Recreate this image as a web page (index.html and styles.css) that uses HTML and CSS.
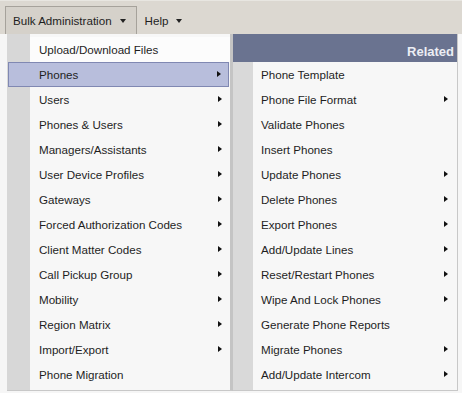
FILE: index.html
```html
<!DOCTYPE html>
<html lang="en">
<head>
    <meta charset="UTF-8">
    <title>Bulk Administration</title>
    <link rel="stylesheet" href="styles.css">
</head>
<body>
    <div class="menubar">
        <div class="top-item open">Bulk Administration <span class="caret"></span></div>
        <div class="top-item">Help <span class="caret"></span></div>
    </div>
    <div class="dropdown">
        <ul class="menu main">
            <li>Upload/Download Files</li>
            <li class="sub active">Phones</li>
            <li class="sub">Users</li>
            <li class="sub">Phones &amp; Users</li>
            <li class="sub">Managers/Assistants</li>
            <li class="sub">User Device Profiles</li>
            <li class="sub">Gateways</li>
            <li class="sub">Forced Authorization Codes</li>
            <li class="sub">Client Matter Codes</li>
            <li class="sub">Call Pickup Group</li>
            <li class="sub">Mobility</li>
            <li class="sub">Region Matrix</li>
            <li class="sub">Import/Export</li>
            <li>Phone Migration</li>
        </ul>
        <div class="submenu">
            <div class="related">Related</div>
            <ul class="menu">
                <li>Phone Template</li>
                <li class="sub">Phone File Format</li>
                <li>Validate Phones</li>
                <li>Insert Phones</li>
                <li class="sub">Update Phones</li>
                <li class="sub">Delete Phones</li>
                <li class="sub">Export Phones</li>
                <li class="sub">Add/Update Lines</li>
                <li class="sub">Reset/Restart Phones</li>
                <li class="sub">Wipe And Lock Phones</li>
                <li>Generate Phone Reports</li>
                <li class="sub">Migrate Phones</li>
                <li class="sub">Add/Update Intercom</li>
            </ul>
        </div>
    </div>
</body>
</html>
```

FILE: styles.css
```css
body {
    margin: 0;
    background: #f6f6f6;
    font-family: "Liberation Sans", Arial, sans-serif;
    font-size: 11.6px;
    color: #1e1e1e;
}
.menubar {
    display: flex;
    height: 34px;
    padding: 5px 0 0 5px;
    box-sizing: border-box;
    background: #dcd8d1;
    border-top: 1px solid #e8e6e1;
}
.top-item {
    display: flex;
    align-items: center;
    gap: 8px;
    padding: 0 7px;
    margin-right: 0;
    border: 1px solid transparent;
    border-bottom: none;
}
.top-item.open {
    background: #d5d1ca;
    border-color: #a6a29b;
    padding-right: 10px;
}
.caret {
    width: 0;
    height: 0;
    border-left: 3px solid transparent;
    border-right: 3px solid transparent;
    border-top: 4px solid #222;
}
.dropdown {
    display: flex;
    margin-left: 7px;
    align-items: flex-start;
}
.menu {
    list-style: none;
    margin: 0;
    padding: 0;
}
.menu li {
    position: relative;
    height: 25px;
    line-height: 25px;
    box-sizing: border-box;
}
.main {
    width: 226px;
    padding: 3px 0 3px;
    background: linear-gradient(to right, #d7d7d7 23px, #f7f7f7 23px);
    border-right: 3px solid #c4c4c4;
    border-bottom: 1px solid #c8c8c8;
    box-sizing: border-box;
}
.main li {
    padding-left: 32px;
}
.main li:first-child {
    background: #fcfcfc;
    margin-left: 23px;
    padding-left: 9px;
}
.main li.active {
    background: #b8bedc;
    border: 1px solid #8088b2;
    margin-left: 1px;
    margin-right: 1px;
    padding-left: 30px;
    line-height: 23px;
}
.menu li.sub::after {
    content: "";
    position: absolute;
    right: 8px;
    top: 9px;
    border-top: 3.5px solid transparent;
    border-bottom: 3.5px solid transparent;
    border-left: 4px solid #111;
}
.main li.active::after {
    top: 8px;
    right: 7px;
}
.submenu {
    width: 224px;
    background: linear-gradient(to right, #d9d9d9 20px, #f7f7f7 20px);
    border-right: 1px solid #c8c8c8;
    border-bottom: 1px solid #c8c8c8;
}
.related {
    height: 28px;
    background: #6a7390;
    color: #eceef4;
    font-weight: bold;
    font-size: 13px;
    text-align: right;
    padding: 10px 3px 0 0;
    box-sizing: border-box;
}
.submenu .menu {
    padding-bottom: 3px;
}
.submenu .menu li {
    padding-left: 28px;
}
.submenu .menu li.sub::after {
    right: 9px;
}
```
